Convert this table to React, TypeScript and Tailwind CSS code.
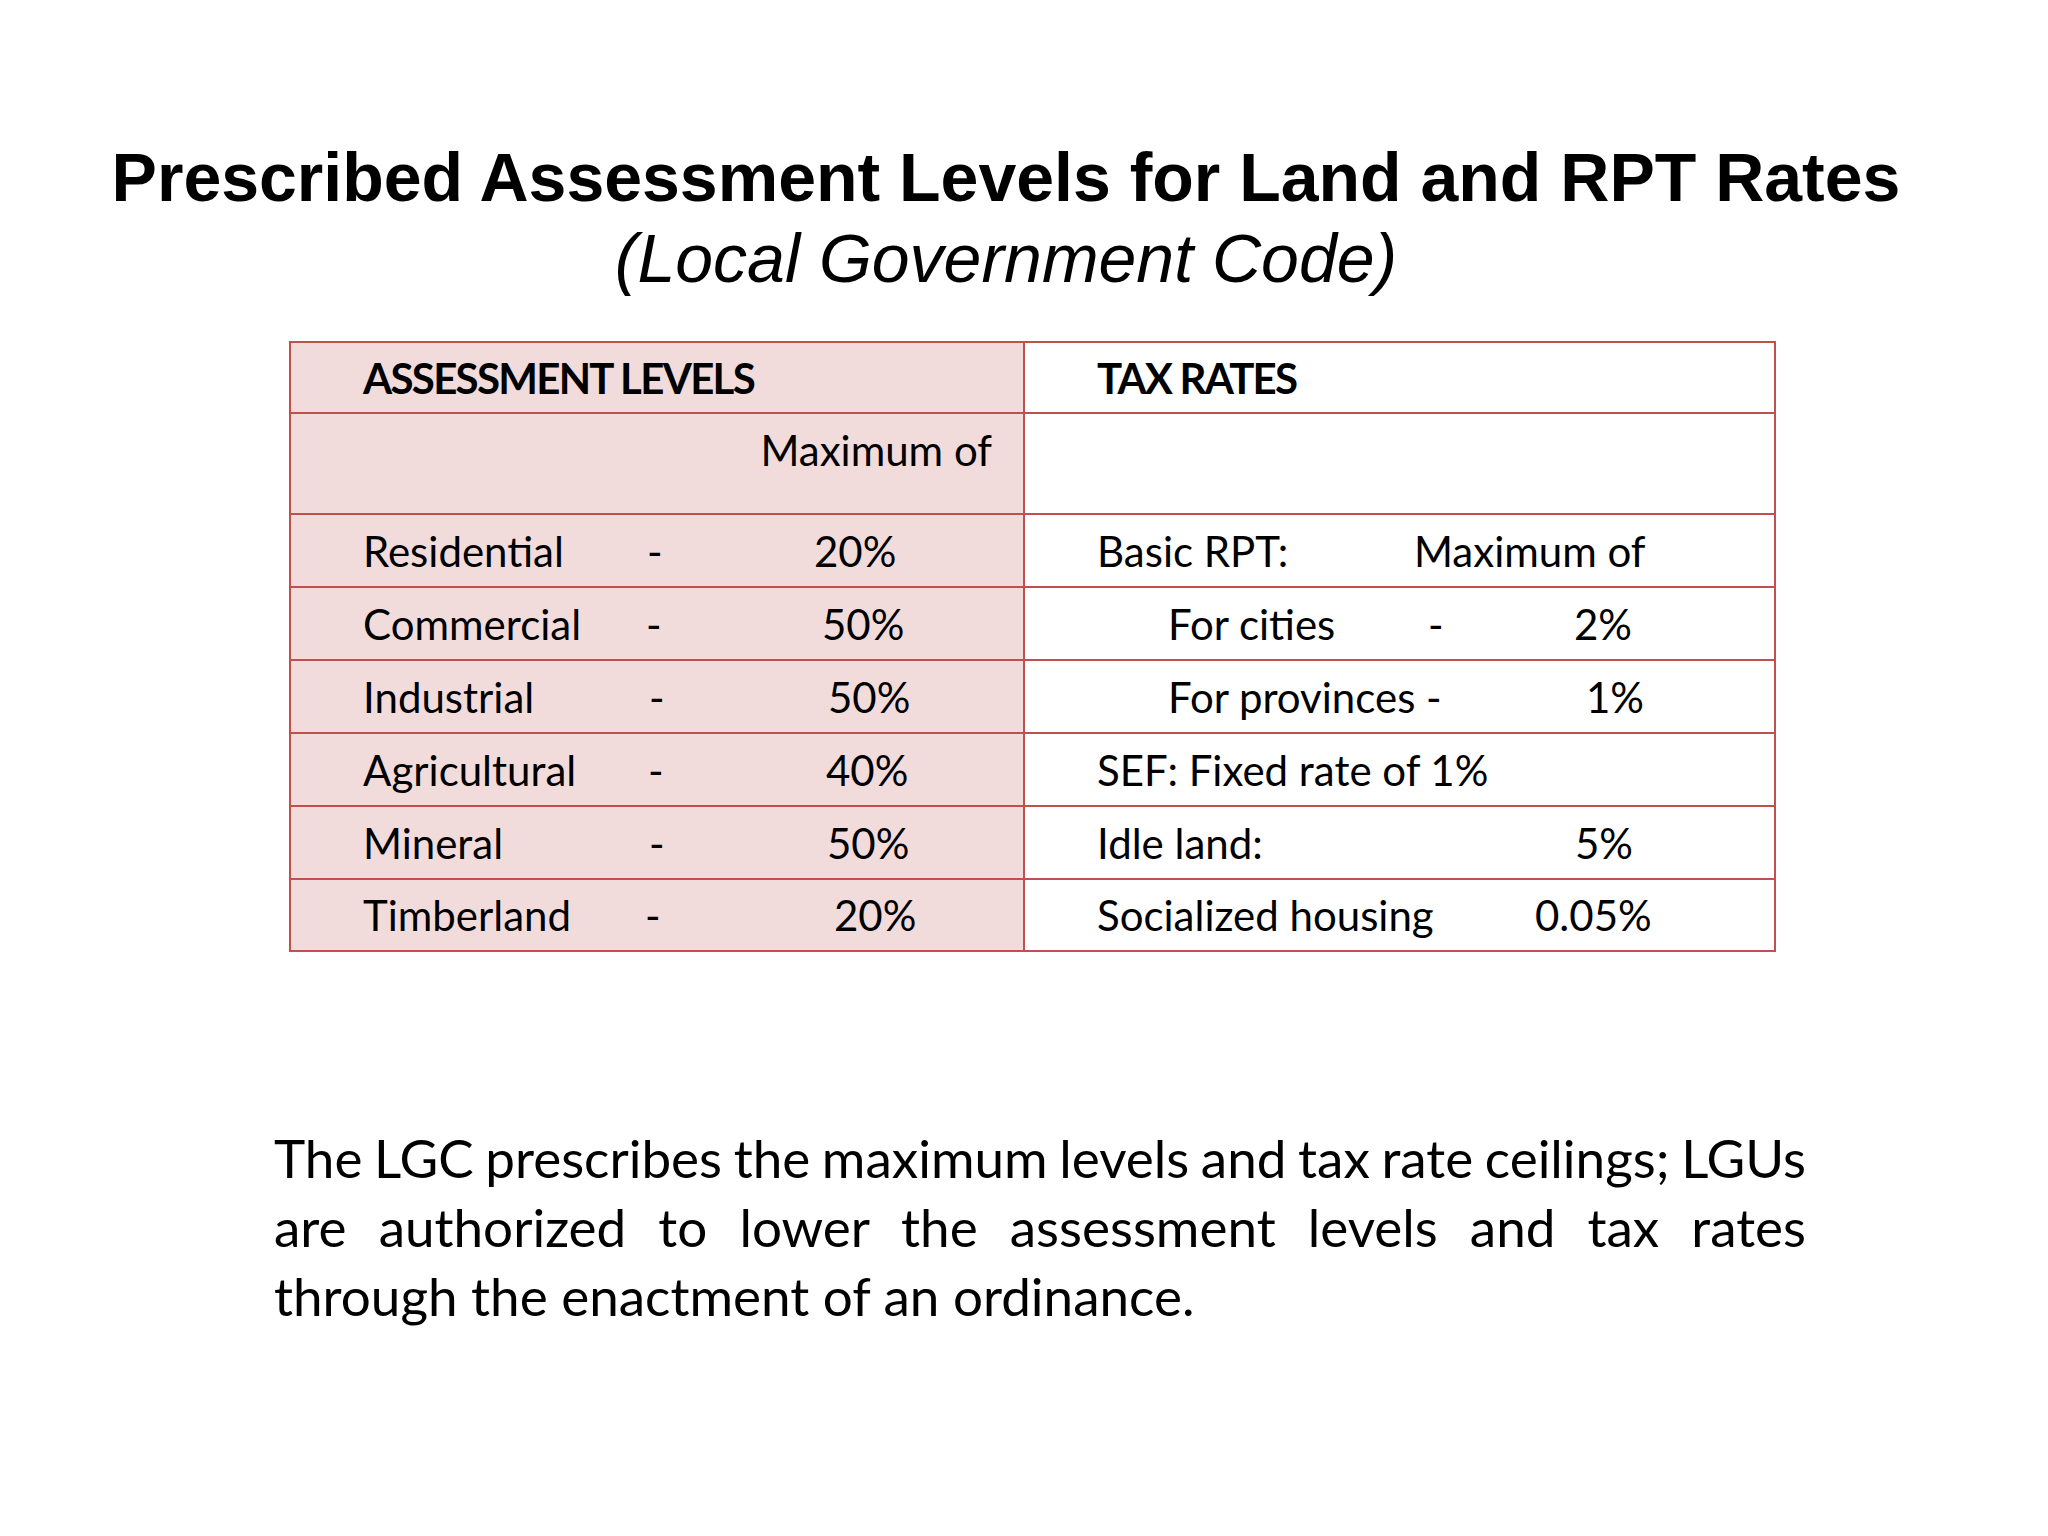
const BORDER = "border-[#c0504d]";

const levels = [
  { label: "Residential", a: "w-[284px]", b: "w-[167px]", v: "20%" },
  { label: "Commercial", a: "w-[283px]", b: "w-[176px]", v: "50%" },
  { label: "Industrial", a: "w-[286px]", b: "w-[179px]", v: "50%" },
  { label: "Agricultural", a: "w-[285px]", b: "w-[178px]", v: "40%" },
  { label: "Mineral", a: "w-[286px]", b: "w-[178px]", v: "50%" },
  { label: "Timberland", a: "w-[282px]", b: "w-[189px]", v: "20%" },
];

function Rates({ i }: { i: number }) {
  switch (i) {
    case 0:
      return (
        <>
          <span className="w-[317px] shrink-0">Basic RPT:</span>
          <span>Maximum of</span>
        </>
      );
    case 1:
      return (
        <>
          <span className="w-[331px] shrink-0 pl-[71px]">For cities</span>
          <span className="w-[146px] shrink-0">-</span>
          <span>2%</span>
        </>
      );
    case 2:
      return (
        <>
          <span className="w-[489px] shrink-0 pl-[71px]">For provinces -</span>
          <span>1%</span>
        </>
      );
    case 3:
      return <span>SEF: Fixed rate of 1%</span>;
    case 4:
      return (
        <>
          <span className="w-[478px] shrink-0">Idle land:</span>
          <span>5%</span>
        </>
      );
    default:
      return (
        <>
          <span className="w-[438px] shrink-0">Socialized housing</span>
          <span>0.05%</span>
        </>
      );
  }
}

const rowH = ["h-[73px]", "h-[73px]", "h-[73px]", "h-[73px]", "h-[73px]", "h-[72px]"];

export default function App() {
  return (
    <div className="w-[2048px] h-[1536px] bg-white text-black overflow-hidden">
      <div className="pt-[137px] pr-[36px] text-center font-['Liberation_Sans',Arial,sans-serif] text-[68px] leading-[81px]">
        <div className="font-bold whitespace-nowrap">
          Prescribed Assessment Levels for Land and RPT Rates
        </div>
        <div className="italic">(Local Government Code)</div>
      </div>

      <div
        className={`mt-[42px] ml-[289px] w-[1487px] border-2 ${BORDER} font-['Lato','Open_Sans',sans-serif] text-[42px] leading-[50px]`}
      >
        <div className="flex h-[69px]">
          <div className={`w-[734px] shrink-0 border-r-2 ${BORDER} bg-[#f2dcdb] flex items-center pl-[72px] font-bold tracking-[-1.7px]`}>
            ASSESSMENT LEVELS
          </div>
          <div className="flex-1 flex items-center pl-[72px] font-bold tracking-[-1.8px]">TAX RATES</div>
        </div>

        <div className={`flex h-[101px] border-t-2 ${BORDER}`}>
          <div className={`w-[734px] shrink-0 border-r-2 ${BORDER} bg-[#f2dcdb]`}>
            <div className="h-[71px] flex items-center justify-end pr-[31px]">Maximum of</div>
          </div>
          <div className="flex-1" />
        </div>

        {levels.map((l, i) => (
          <div key={l.label} className={`flex ${rowH[i]} border-t-2 ${BORDER}`}>
            <div className={`w-[734px] shrink-0 border-r-2 ${BORDER} bg-[#f2dcdb] flex items-center pl-[72px] whitespace-nowrap`}>
              <span className={`${l.a} shrink-0`}>{l.label}</span>
              <span className={`${l.b} shrink-0`}>-</span>
              <span>{l.v}</span>
            </div>
            <div className="flex-1 flex items-center pl-[72px] whitespace-nowrap">
              <Rates i={i} />
            </div>
          </div>
        ))}
      </div>

      <div className="mt-[171px] ml-[274px] w-[1532px] font-['Lato','Open_Sans',sans-serif] text-[53px] leading-[69px] text-justify">
        <div className="[text-align-last:justify] [word-spacing:-3px] whitespace-nowrap">
          The LGC prescribes the maximum levels and tax rate ceilings; LGUs
        </div>
        <div className="[text-align-last:justify]">
          are authorized to lower the assessment levels and tax rates
        </div>
        <div>through the enactment of an ordinance.</div>
      </div>
    </div>
  );
}
